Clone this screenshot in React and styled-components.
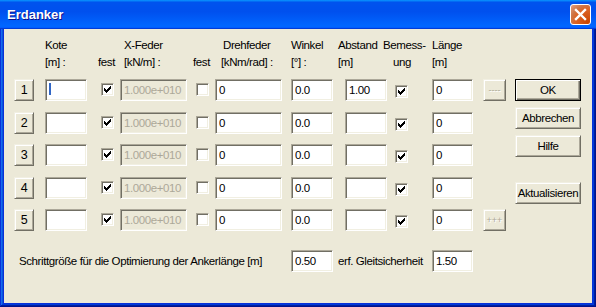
import React from "react";
import styled, { createGlobalStyle, css } from "styled-components";

const FONT = `"Liberation Sans", Arial, sans-serif`;
const COLS = "31px 56px 19px 76px 19px 76px 54px 50px 37px 51px 23px";

const GlobalStyle = createGlobalStyle`
  html, body { margin: 0; padding: 0; background: #ffffff; }
  * { box-sizing: border-box; }
`;

const Window = styled.div`
  width: 596px;
  height: 307px;
  display: flex;
  flex-direction: column;
  padding: 0 4px 4px;
  background: #0831d9;
  box-shadow: inset -1px -1px #00138c, inset 1px 1px #0831d9,
    inset -2px -2px #001ea0, inset 2px 2px #166aee,
    inset -3px -3px #003bda, inset 3px 3px #0855dd;
`;

const TitleBar = styled.div`
  height: 29px;
  margin: 0 -4px;
  padding: 0 5px 0 7px;
  display: flex;
  align-items: center;
  justify-content: space-between;
  background: linear-gradient(
    180deg,
    #0997ff,
    #0053ee 8%,
    #0050ee 40%,
    #0066ff 88%,
    #0066ff 93%,
    #005bff 95%,
    #003dd7 96%,
    #003dd7
  );
`;

const Title = styled.span`
  font: bold 13px "Liberation Sans", Arial, sans-serif;
  color: #ffffff;
  text-shadow: 1px 1px #0f1089;
`;

const CloseButton = styled.button`
  width: 21px;
  height: 21px;
  padding: 0;
  border: 1px solid #ffffff;
  border-radius: 3px;
  background: radial-gradient(circle at 90% 90%, #cc4600 0%, #dc6527 55%, #cd7546 70%, #e5a081 100%);
  display: flex;
  align-items: center;
  justify-content: center;
`;

const Body = styled.div`
  flex: 1;
  display: flex;
  padding: 8px 0 0 10px;
  background: #ece9d8;
  font-family: ${FONT};
  font-size: 11.5px;
  letter-spacing: -0.4px;
  color: #000000;
`;

const Main = styled.div`
  width: 492px;
  display: flex;
  flex-direction: column;
`;

const HeaderGrid = styled.div`
  display: grid;
  grid-template-columns: ${COLS};
  grid-template-rows: 17px 17px;
  line-height: 17px;
`;

const HeadCell = styled.div`
  grid-column: ${(p) => p.$col};
  grid-row: ${(p) => p.$row};
  margin-left: ${(p) => p.$shift || 0}px;
  white-space: nowrap;
`;

const Rows = styled.div`
  display: flex;
  flex-direction: column;
  row-gap: 10.5px;
  margin-top: 8px;
`;

const Row = styled.div`
  display: grid;
  grid-template-columns: ${COLS};
  height: 22px;
  align-items: start;
`;

const raised = css`
  border: 1px solid;
  border-color: #f1efe2 #716f64 #716f64 #f1efe2;
  box-shadow: inset 1px 1px #ffffff, inset -1px -1px #aca899;
  background: #ece9d8;
`;

const sunken = css`
  border: 1px solid;
  border-color: #aca899 #ffffff #ffffff #aca899;
  box-shadow: inset 1px 1px #716f64, inset -1px -1px #f1efe2;
`;

const NumButton = styled.div`
  ${raised};
  width: 20px;
  height: 22px;
  display: flex;
  align-items: center;
  justify-content: center;
  font-size: 12.5px;
`;

const ToolButton = styled.div`
  ${raised};
  width: 23px;
  height: 22px;
  display: flex;
  align-items: center;
  justify-content: center;
  color: #aca899;
  text-shadow: 1px 1px #ffffff;
  font-size: 9px;
  letter-spacing: 0;
  grid-column: 11;
`;

const Field = styled.div`
  ${sunken};
  position: relative;
  width: ${(p) => p.$w}px;
  height: 22px;
  padding: 0 3px;
  line-height: 20px;
  white-space: nowrap;
  overflow: hidden;
  background: ${(p) => (p.$disabled ? "#ece9d8" : "#ffffff")};
  color: ${(p) => (p.$disabled ? "#aca899" : "#000000")};
  grid-column: ${(p) => p.$col || "auto"};
`;

const Caret = styled.span`
  position: absolute;
  left: 3px;
  top: 3px;
  width: 2px;
  height: 12px;
  background: #3166c5;
`;

const Box = styled.div`
  ${sunken};
  width: 13px;
  height: 13px;
  margin-top: ${(p) => p.$drop}px;
  background: #ffffff;
  display: flex;
  align-items: center;
  justify-content: center;
`;

const Footer = styled.div`
  display: grid;
  grid-template-columns: ${COLS};
  height: 22px;
  margin-top: 19px;
  align-items: center;
`;

const FooterText = styled.div`
  grid-column: ${(p) => p.$col};
  margin-left: ${(p) => p.$shift}px;
  white-space: nowrap;
`;

const Side = styled.div`
  margin-left: 9px;
  padding-top: 42px;
  display: flex;
  flex-direction: column;
  gap: 6px;
`;

const SideButton = styled.div`
  ${raised};
  width: 66px;
  height: 22px;
  display: flex;
  align-items: center;
  justify-content: center;
  margin-top: ${(p) => p.$gapAbove || 0}px;
  ${(p) =>
    p.$default &&
    css`
      border: 1px solid #000000;
      box-shadow: inset 1px 1px #ffffff, inset -1px -1px #716f64,
        inset -2px -2px #aca899;
    `}
`;

const CheckMark = () => (
  <svg width="7" height="7" viewBox="0 0 7 7" shapeRendering="crispEdges">
    {[2, 3, 4, 3, 2, 1, 0].map((y, x) => (
      <rect key={x} x={x} y={y} width="1" height="3" fill="#000" />
    ))}
  </svg>
);

const Check = ({ checked, drop = 4 }) => (
  <Box $drop={drop}>{checked && <CheckMark />}</Box>
);

const rows = [
  { n: 1, abstand: "1.00", caret: true, tool: "----" },
  { n: 2, abstand: "" },
  { n: 3, abstand: "" },
  { n: 4, abstand: "" },
  { n: 5, abstand: "", tool: "+++" },
];

export default function App() {
  return (
    <>
      <GlobalStyle />
      <Window>
        <TitleBar>
          <Title>Erdanker</Title>
          <CloseButton aria-label="Schließen">
            <svg width="13" height="13" viewBox="0 0 13 13">
              <path d="M2 2 L11 11 M11 2 L2 11" stroke="#ffffff" strokeWidth="2.4" strokeLinecap="square" />
            </svg>
          </CloseButton>
        </TitleBar>
        <Body>
          <Main>
            <HeaderGrid>
              <HeadCell $col={2} $row={1}>Kote</HeadCell>
              <HeadCell $col={4} $row={1} $shift={4}>X-Feder</HeadCell>
              <HeadCell $col={6} $row={1} $shift={8}>Drehfeder</HeadCell>
              <HeadCell $col={7} $row={1}>Winkel</HeadCell>
              <HeadCell $col={8} $row={1} $shift={-7}>Abstand</HeadCell>
              <HeadCell $col={9} $row={1} $shift={-12}>Bemess-</HeadCell>
              <HeadCell $col={10} $row={1}>Länge</HeadCell>
              <HeadCell $col={2} $row={2}>[m] :</HeadCell>
              <HeadCell $col={3} $row={2} $shift={-3}>fest</HeadCell>
              <HeadCell $col={4} $row={2} $shift={4}>[kN/m] :</HeadCell>
              <HeadCell $col={5} $row={2} $shift={-3}>fest</HeadCell>
              <HeadCell $col={6} $row={2} $shift={6}>[kNm/rad] :</HeadCell>
              <HeadCell $col={7} $row={2}>[°] :</HeadCell>
              <HeadCell $col={8} $row={2} $shift={-7}>[m]</HeadCell>
              <HeadCell $col={9} $row={2} $shift={-2}>ung</HeadCell>
              <HeadCell $col={10} $row={2}>[m]</HeadCell>
            </HeaderGrid>
            <Rows>
              {rows.map((r) => (
                <Row key={r.n}>
                  <NumButton>{r.n}</NumButton>
                  <Field $w={42}>{r.caret && <Caret />}</Field>
                  <Check checked />
                  <Field $w={67} $disabled>1.000e+010</Field>
                  <Check />
                  <Field $w={67}>0</Field>
                  <Field $w={42}>0.0</Field>
                  <Field $w={42}>{r.abstand}</Field>
                  <Check checked drop={6} />
                  <Field $w={41}>0</Field>
                  {r.tool && <ToolButton>{r.tool}</ToolButton>}
                </Row>
              ))}
            </Rows>
            <Footer>
              <FooterText $col="1 / span 6" $shift={5}>
                Schrittgröße für die Optimierung der Ankerlänge [m]
              </FooterText>
              <Field $w={42} $col={7}>0.50</Field>
              <FooterText $col="8 / span 2" $shift={-7}>erf. Gleitsicherheit</FooterText>
              <Field $w={41} $col={10}>1.50</Field>
            </Footer>
          </Main>
          <Side>
            <SideButton $default>OK</SideButton>
            <SideButton>Abbrechen</SideButton>
            <SideButton>Hilfe</SideButton>
            <SideButton $gapAbove={19}>Aktualisieren</SideButton>
          </Side>
        </Body>
      </Window>
    </>
  );
}
